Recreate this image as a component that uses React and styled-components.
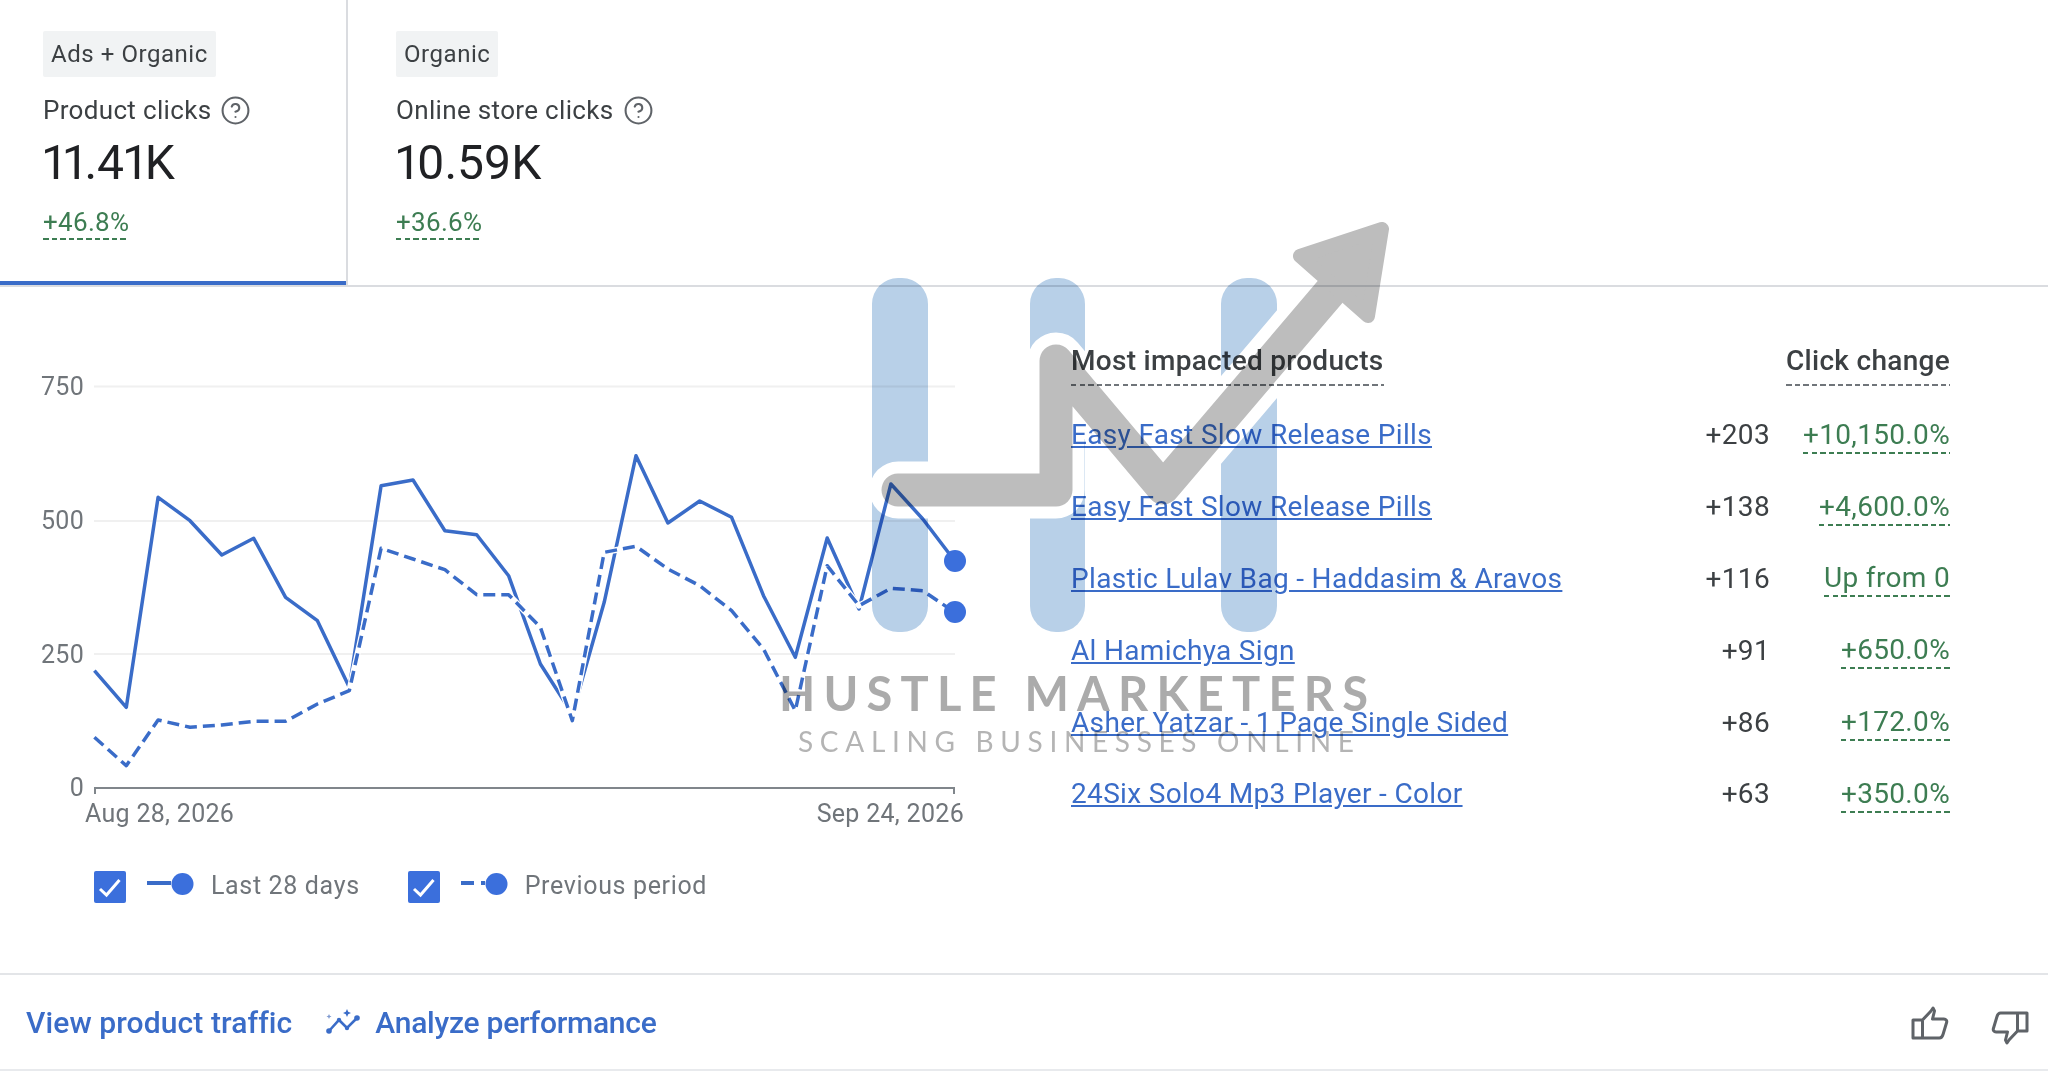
import styled, { createGlobalStyle, css } from 'styled-components';
import { CircleHelp } from 'lucide-react';

const GlobalStyle = createGlobalStyle`
  html, body {
    margin: 0;
    padding: 0;
    background: #fff;
    font-family: Roboto, "Liberation Sans", sans-serif;
  }
`;

const BLUE = '#3a6cc8';
const DOT = '#3b6fdc';
const GREEN = '#3d7d52';

const dashed = (color, pad = 6) => css`
  padding-bottom: ${pad}px;
  background-image: repeating-linear-gradient(90deg, ${color} 0 5.5px, transparent 5.5px 8.6px);
  background-size: 100% 2px;
  background-repeat: no-repeat;
  background-position: left bottom;
`;

const tabs = [
  { chip: 'Ads + Organic', label: 'Product clicks', value: '11.41K', delta: '+46.8%', active: true },
  { chip: 'Organic', label: 'Online store clicks', value: '10.59K', delta: '+36.6%' },
];

const products = [
  { name: 'Easy Fast Slow Release Pills', clicks: '+203', change: '+10,150.0%' },
  { name: 'Easy Fast Slow Release Pills', clicks: '+138', change: '+4,600.0%' },
  { name: 'Plastic Lulav Bag - Haddasim & Aravos', clicks: '+116', change: 'Up from 0' },
  { name: 'Al Hamichya Sign', clicks: '+91', change: '+650.0%' },
  { name: 'Asher Yatzar - 1 Page Single Sided', clicks: '+86', change: '+172.0%' },
  { name: '24Six Solo4 Mp3 Player - Color', clicks: '+63', change: '+350.0%' },
];

const solidY = [671.7, 708.3, 498.3, 521.7, 556, 539.3, 598.3, 621.7, 688.3, 486.7, 481, 531.7, 535.7, 576.7, 665, 715, 603.3, 456.7, 524, 502, 518.3, 596.7, 658.3, 539, 610, 485, 520, 561.7];
const dashedY = [738.3, 766.7, 721, 728.3, 726, 722.3, 722.3, 705, 691.7, 549.3, 560, 570.7, 595.7, 595.7, 628.3, 721.7, 553.3, 547.3, 570, 586.7, 611.7, 650, 711.7, 566.7, 606.7, 589.3, 591.7, 613.3];
const toPoints = (ys) => ys.map((y, i) => `${(94.4 + 31.86 * i).toFixed(1)},${y}`).join(' ');

const grid = [
  { label: '750', y: 387.5, baseline: 396 },
  { label: '500', y: 522, baseline: 530 },
  { label: '250', y: 655, baseline: 664 },
];

function Chart() {
  return (
    <ChartSvg viewBox="0 288 1000 552">
      {grid.map(({ label, y, baseline }) => (
        <g key={label}>
          <line x1="94" x2="955" y1={y} y2={y} stroke="#f0f0f0" strokeWidth="2" />
          <AxisText x="84" y={baseline} textAnchor="end">{label}</AxisText>
        </g>
      ))}
      <AxisText x="84" y="797" textAnchor="end">0</AxisText>
      <path d="M95 795V789H954V795" fill="none" stroke="#80868b" strokeWidth="2" />
      <AxisText x="85" y="823">Aug 28, 2026</AxisText>
      <AxisText x="964" y="823" textAnchor="end">Sep 24, 2026</AxisText>
      <polyline points={toPoints(solidY)} fill="none" stroke={BLUE} strokeWidth="3.5" strokeLinejoin="round" />
      <polyline points={toPoints(dashedY)} fill="none" stroke="#fff" strokeWidth="6" strokeLinejoin="round" />
      <polyline points={toPoints(dashedY)} fill="none" stroke={BLUE} strokeWidth="3.5" strokeDasharray="12 6" strokeLinejoin="round" />
      <circle cx="955" cy="562" r="11" fill={DOT} />
      <circle cx="955" cy="613" r="11" fill={DOT} />
    </ChartSvg>
  );
}

function CheckIcon() {
  return (
    <svg width="32" height="32" viewBox="0 0 32 32">
      <rect x="0" y="0" width="32" height="32" rx="2" fill={DOT} />
      <polyline points="6,18 12.5,24 25.5,9" fill="none" stroke="#fff" strokeWidth="3" />
    </svg>
  );
}

function LegendMark({ dashedLine }) {
  return (
    <svg width="47" height="24" viewBox="0 0 47 24">
      {dashedLine ? (
        <>
          <line x1="0" x2="13" y1="11" y2="11" stroke={BLUE} strokeWidth="4" />
          <line x1="20" x2="24" y1="11" y2="11" stroke={BLUE} strokeWidth="4" />
        </>
      ) : (
        <line x1="0" x2="24" y1="11" y2="11" stroke={BLUE} strokeWidth="4" />
      )}
      <circle cx="35.5" cy="12" r="11" fill={DOT} />
    </svg>
  );
}

function TrendIcon() {
  return (
    <svg width="34" height="26" viewBox="0 0 34 26" fill="none">
      <polyline points="3,22 13,11 21,19 31,9" stroke={BLUE} strokeWidth="2.6" />
      <circle cx="3" cy="22" r="2.8" fill={BLUE} />
      <circle cx="13" cy="11" r="2.2" fill={BLUE} />
      <circle cx="21" cy="19" r="2.2" fill={BLUE} />
      <circle cx="31" cy="9" r="2.8" fill={BLUE} />
      <path d="M3 5l.8 1.7 1.7.8-1.7.8L3 10l-.8-1.7-1.7-.8 1.7-.8z" fill="#7f9ad0" />
      <path d="M21 0l1.2 2.8L25 4l-2.8 1.2L21 8l-1.2-2.8L17 4l2.8-1.2z" fill={BLUE} />
    </svg>
  );
}

function ThumbIcon({ down }) {
  return (
    <ThumbSvg $down={down} width="38" height="34" viewBox="0 0 38 34" fill="none">
      <path
        d="M2 14h9.5v18H2zM11.5 14L20 5l2-3 1.5 3-2 8h11.5c2 0 3.2 1.6 2.6 3.5l-3.6 12c-.6 2-1.8 3.5-3.6 3.5H11.5"
        stroke="#5f6368"
        strokeWidth="3"
        strokeLinejoin="round"
      />
    </ThumbSvg>
  );
}

const ARROW = 'M898 490H1056V361L1163 488L1330 292';
const HEAD = '1382,229 1300,256 1368,316';

function Watermark() {
  return (
    <WatermarkSvg viewBox="0 0 2048 1071">
      <rect x="872" y="278" width="56" height="354" rx="26" fill="#b8d0e8" />
      <rect x="1030" y="278" width="55" height="354" rx="26" fill="#b8d0e8" />
      <rect x="1221" y="278" width="56" height="354" rx="26" fill="#b8d0e8" />
      <path d={ARROW} fill="none" stroke="#fff" strokeWidth="57" strokeLinecap="round" strokeLinejoin="round" />
      <path d={ARROW} fill="none" stroke="#bdbdbd" strokeWidth="33" strokeLinecap="round" strokeLinejoin="round" />
      <polygon points={HEAD} fill="#bdbdbd" stroke="#bdbdbd" strokeWidth="14" strokeLinejoin="round" />
      <BrandText x="779" y="711" textLength="589">HUSTLE MARKETERS</BrandText>
      <TagText x="798" y="752" textLength="556">SCALING BUSINESSES ONLINE</TagText>
    </WatermarkSvg>
  );
}

export default function App() {
  return (
    <Page>
      <GlobalStyle />
      <TabRow>
        {tabs.map(({ chip, label, value, delta, active }) => (
          <Tab key={label} $active={active}>
            <Chip>{chip}</Chip>
            <TabLabel>
              {label}
              <CircleHelp size={31} strokeWidth={1.6} color="#5f6368" />
            </TabLabel>
            <TabValue>{value}</TabValue>
            <TabDelta>{delta}</TabDelta>
          </Tab>
        ))}
      </TabRow>
      <Main>
        <ChartColumn>
          <Chart />
          <Legend>
            <LegendItem>
              <CheckIcon />
              <LegendMark />
              <LegendLabel>Last 28 days</LegendLabel>
            </LegendItem>
            <LegendItem>
              <CheckIcon />
              <LegendMark dashedLine />
              <LegendLabel>Previous period</LegendLabel>
            </LegendItem>
          </Legend>
        </ChartColumn>
        <TableColumn>
          <TableHead>
            <HeadCell>Most impacted products</HeadCell>
            <HeadCell>Click change</HeadCell>
          </TableHead>
          {products.map(({ name, clicks, change }, i) => (
            <TableRow key={i}>
              <ProductLink href="#">{name}</ProductLink>
              <Clicks>{clicks}</Clicks>
              <ChangeCell><Change>{change}</Change></ChangeCell>
            </TableRow>
          ))}
        </TableColumn>
      </Main>
      <Footer>
        <FooterLink>View product traffic</FooterLink>
        <AnalyzeLink>
          <TrendIcon />
          <FooterLink $tight>Analyze performance</FooterLink>
        </AnalyzeLink>
        <Thumbs>
          <ThumbIcon />
          <ThumbIcon down />
        </Thumbs>
      </Footer>
      <Watermark />
    </Page>
  );
}

const Page = styled.div`
  position: relative;
  width: 2048px;
  height: 1071px;
  overflow: hidden;
  background: #fff;
`;

const TabRow = styled.div`
  display: flex;
  height: 287px;
  box-sizing: border-box;
  border-bottom: 2px solid #dadce0;
`;

const Tab = styled.div`
  box-sizing: border-box;
  height: 285px;
  padding: 31px 0 0 ${(p) => (p.$active ? '43px' : '48px')};
  width: ${(p) => (p.$active ? '348px' : 'auto')};
  border-right: ${(p) => (p.$active ? '2px solid #dadce0' : 'none')};
  box-shadow: ${(p) => (p.$active ? `inset 0 -4px 0 ${BLUE}` : 'none')};
`;

const Chip = styled.div`
  display: table;
  height: 46px;
  line-height: 46px;
  padding: 0 8px;
  background: #f1f3f4;
  border-radius: 2px;
  color: #3c4043;
  font-size: 24px;
  letter-spacing: 0.55px;
`;

const TabLabel = styled.div`
  display: flex;
  align-items: center;
  gap: 9px;
  height: 34px;
  margin-top: 16px;
  color: #3c4043;
  font-size: 26px;
  letter-spacing: 0.33px;
`;

const TabValue = styled.div`
  margin-top: 9px;
  height: 54px;
  line-height: 54px;
  color: #202124;
  font-size: 48px;
  letter-spacing: -0.1px;
  font-variant-numeric: proportional-nums;
`;

const TabDelta = styled.div`
  display: table;
  margin-top: 18px;
  color: ${GREEN};
  font-size: 26px;
  letter-spacing: 0.3px;
  line-height: 28px;
  ${dashed(GREEN, 4)}
`;

const Main = styled.div`
  display: flex;
  height: 688px;
  border-bottom: 2px solid #e3e5e8;
  box-sizing: border-box;
`;

const ChartColumn = styled.div`
  width: 1000px;
  flex: none;
`;

const ChartSvg = styled.svg`
  display: block;
  width: 1000px;
  height: 552px;
`;

const AxisText = styled.text`
  fill: #70757a;
  font-size: 25px;
  letter-spacing: 0.3px;
  font-family: Roboto, sans-serif;
`;

const Legend = styled.div`
  display: flex;
  gap: 48px;
  padding: 32px 0 0 94px;
`;

const LegendItem = styled.div`
  display: flex;
  align-items: flex-start;
  gap: 21px;
  & > svg:nth-child(2) { margin-top: 1px; margin-right: -4px; }
`;

const LegendLabel = styled.span`
  color: #70757a;
  font-size: 25px;
  line-height: 30px;
  letter-spacing: 0.65px;
`;

const TableColumn = styled.div`
  flex: 1;
  padding: 56px 98px 0 71px;
`;

const TableHead = styled.div`
  display: flex;
  justify-content: space-between;
  margin-bottom: 13px;
`;

const HeadCell = styled.div`
  color: #3c4043;
  font-size: 28px;
  letter-spacing: 0.3px;
  font-weight: 500;
  line-height: 36px;
  ${dashed('#70757a', 7)}
`;

const TableRow = styled.div`
  display: grid;
  grid-template-columns: 1fr 130px 180px;
  align-items: center;
  height: 71.8px;
`;

const ProductLink = styled.a`
  color: ${BLUE};
  font-size: 28px;
  letter-spacing: 0.33px;
  text-decoration: underline;
  justify-self: start;
`;

const Clicks = styled.div`
  color: #3c4043;
  font-size: 28px;
  letter-spacing: 0.33px;
  text-align: right;
`;

const ChangeCell = styled.div`
  display: flex;
  justify-content: flex-end;
`;

const Change = styled.span`
  display: block;
  margin-top: 3px;
  color: ${GREEN};
  font-size: 28px;
  letter-spacing: 0.33px;
  line-height: 32px;
  ${dashed(GREEN, 3)}
`;

const Footer = styled.div`
  display: flex;
  align-items: center;
  box-sizing: border-box;
  height: 96px;
  padding: 0 19px 0 26px;
  border-bottom: 2px solid #e8eaed;
`;

const FooterLink = styled.span`
  color: ${BLUE};
  font-size: 30px;
  letter-spacing: ${(p) => (p.$tight ? '-0.25px' : '0.1px')};
  font-weight: 500;
`;

const AnalyzeLink = styled.div`
  display: flex;
  align-items: center;
  gap: 15px;
  margin-left: 34px;
`;

const Thumbs = styled.div`
  display: flex;
  gap: 42px;
  margin-top: 2px;
  margin-left: auto;
`;

const ThumbSvg = styled.svg`
  display: block;
  transform: ${(p) => (p.$down ? 'rotate(180deg) translateY(-5px)' : 'none')};
`;

const WatermarkSvg = styled.svg`
  position: absolute;
  left: 0;
  top: 0;
  width: 2048px;
  height: 1071px;
  mix-blend-mode: multiply;
  pointer-events: none;
`;

const BrandText = styled.text`
  fill: #ababab;
  font-family: Lato, sans-serif;
  font-weight: 700;
  font-size: 47px;
`;

const TagText = styled.text`
  fill: #b4b4b4;
  font-family: Lato, sans-serif;
  font-size: 28px;
`;
